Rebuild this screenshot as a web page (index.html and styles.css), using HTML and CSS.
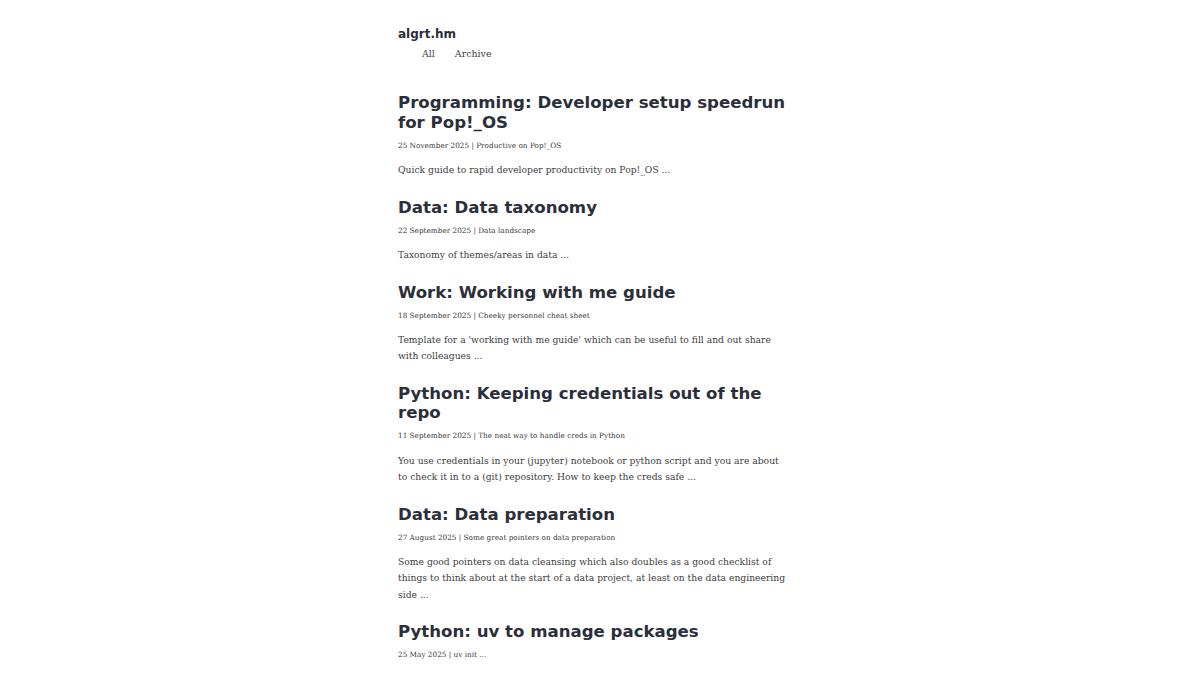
FILE: index.html
```html
<!DOCTYPE html>
<html lang="en">
<head>
<meta charset="utf-8">
<title>algrt.hm</title>
<link rel="stylesheet" href="styles.css">
</head>
<body>
<div class="page">
  <header class="site-header">
    <div class="site-title">algrt.hm</div>
    <nav class="site-nav">
      <a href="#">All</a>
      <a href="#">Archive</a>
    </nav>
  </header>
  <main class="posts">
    <article class="post">
      <h2 class="post-title">Programming: Developer setup speedrun for Pop!_OS</h2>
      <p class="post-meta">25 November 2025 | Productive on Pop!_OS</p>
      <p class="post-excerpt">Quick guide to rapid developer productivity on Pop!_OS ...</p>
    </article>
    <article class="post">
      <h2 class="post-title">Data: Data taxonomy</h2>
      <p class="post-meta">22 September 2025 | Data landscape</p>
      <p class="post-excerpt">Taxonomy of themes/areas in data ...</p>
    </article>
    <article class="post">
      <h2 class="post-title">Work: Working with me guide</h2>
      <p class="post-meta">18 September 2025 | Cheeky personnel cheat sheet</p>
      <p class="post-excerpt">Template for a 'working with me guide' which can be useful to fill and out share with colleagues ...</p>
    </article>
    <article class="post">
      <h2 class="post-title">Python: Keeping credentials out of the repo</h2>
      <p class="post-meta">11 September 2025 | The neat way to handle creds in Python</p>
      <p class="post-excerpt">You use credentials in your (jupyter) notebook or python script and you are about to check it in to a (git) repository. How to keep the creds safe ...</p>
    </article>
    <article class="post">
      <h2 class="post-title">Data: Data preparation</h2>
      <p class="post-meta">27 August 2025 | Some great pointers on data preparation</p>
      <p class="post-excerpt">Some good pointers on data cleansing which also doubles as a good checklist of things to think about at the start of a data project, at least on the data engineering side ...</p>
    </article>
    <article class="post">
      <h2 class="post-title">Python: uv to manage packages</h2>
      <p class="post-meta">25 May 2025 | uv init ...</p>
      <p class="post-excerpt">Installing and managing Python packages and projects with 'uv' ...</p>
    </article>
    <article class="post">
      <h2 class="post-title">Data: Data quality</h2>
      <p class="post-meta">2 May 2025 | Notes on data quality</p>
      <p class="post-excerpt">Some notes on data quality ...</p>
    </article>
  </main>
</div>
</body>
</html>
```

FILE: styles.css
```css
html, body {
  margin: 0;
  padding: 0;
  background: #ffffff;
}

body {
  font-family: "DejaVu Serif", "Liberation Serif", serif;
  color: #3d3d3d;
}

.page {
  width: 390px;
  margin: 0 auto;
  padding: 25px 14px 40px 0;
}

.site-title {
  font-family: "DejaVu Sans", sans-serif;
  font-weight: bold;
  font-size: 12px;
  line-height: 18px;
  color: #2b2f3a;
}

.site-nav {
  display: flex;
  gap: 20px;
  padding-left: 24px;
  margin-top: 1px;
}

.site-nav a {
  font-size: 9.45px;
  line-height: 20px;
  color: #3d3d3d;
  text-decoration: none;
}

.posts {
  margin-top: 29px;
}

.post {
  margin-bottom: 19.25px;
}

.post-title {
  font-family: "DejaVu Sans", sans-serif;
  font-weight: bold;
  font-size: 16.6px;
  line-height: 19.5px;
  color: #2b2f3a;
  margin: 0;
}

.post-meta {
  font-size: 7.3px;
  line-height: 10px;
  color: #383838;
  margin: 8.5px 0 0;
}

.post-excerpt {
  font-size: 9.2px;
  line-height: 16.25px;
  color: #3d3d3d;
  margin: 11.5px 0 0;
}
```
